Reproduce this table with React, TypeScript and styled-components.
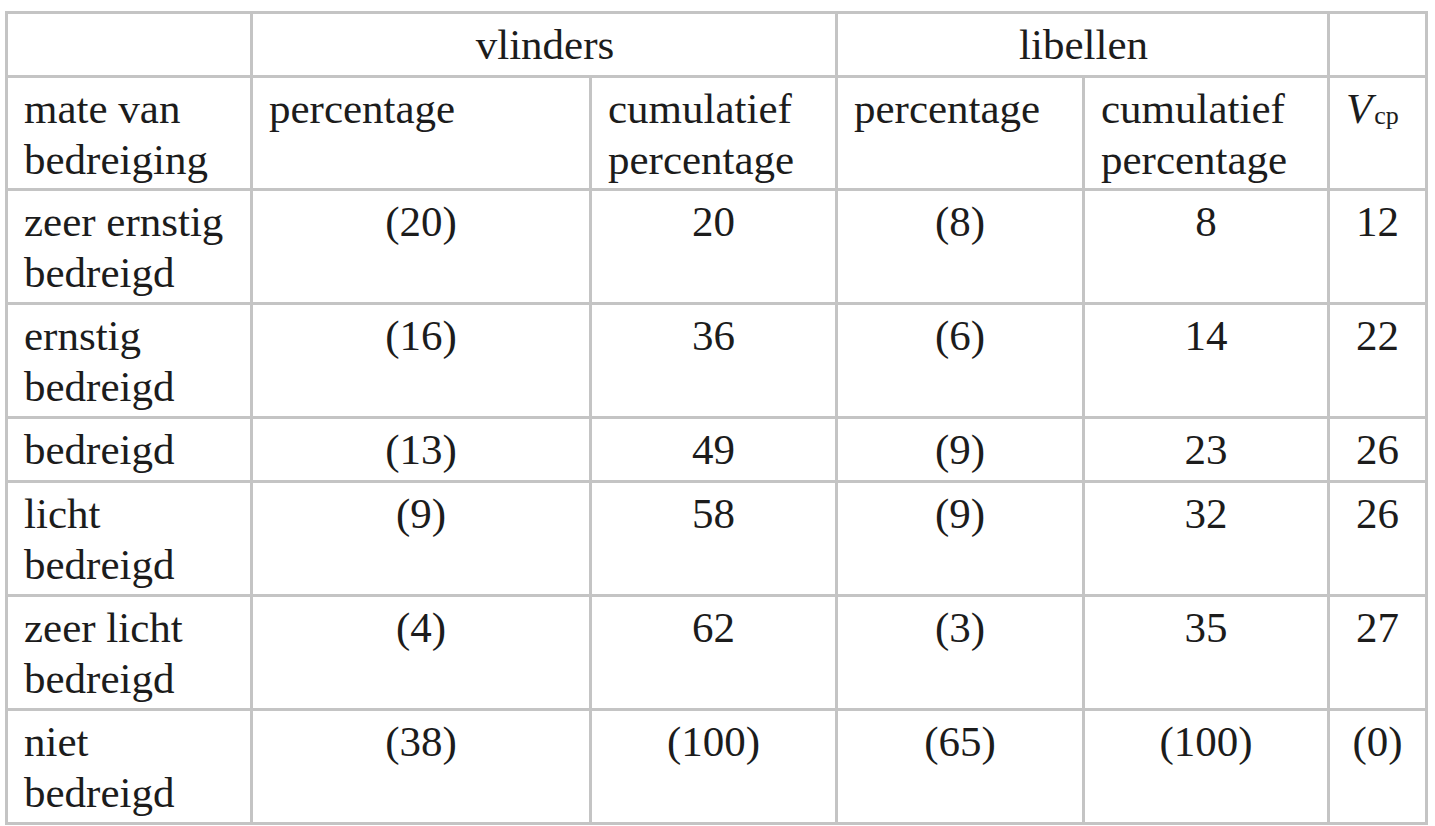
import { Fragment } from 'react'
import styled, { createGlobalStyle } from 'styled-components'

const GlobalStyle = createGlobalStyle`
  html, body {
    margin: 0;
    padding: 0;
    background: #ffffff;
  }
  body {
    font-family: "Liberation Serif", "Times New Roman", serif;
    color: #1c1c1c;
  }
`

const Page = styled.div`
  padding: 11px 0 0 5px;
`

// grey background shows through the 3px gaps as the table rules
const Table = styled.div`
  display: inline-grid;
  grid-template-columns: 242px 336px 243px 244px 242px 95px;
  grid-template-rows: 61px 110px 111px 111px 61px 111px 111px 111px;
  gap: 3px;
  padding: 3px;
  background: #c4c4c4;
`

const Cell = styled.div<{ $align?: 'left' | 'center'; $span?: number }>`
  background: #ffffff;
  font-size: 43px;
  line-height: 51px;
  padding: 5px 14px 0 16px;
  text-align: ${(p) => p.$align || 'left'};
  grid-column: ${(p) => (p.$span ? `span ${p.$span}` : 'auto')};
  white-space: nowrap;
`

const NumCell = styled(Cell)`
  padding-left: 0;
  padding-right: 0;
  text-align: center;
`

const Italic = styled.span`
  font-style: italic;
`

const Sub = styled.span`
  font-size: 26px;
  vertical-align: -1px;
  margin-left: 2px;
`

interface Row {
  label: string[]
  values: string[]
}

const rows: Row[] = [
  { label: ['zeer ernstig', 'bedreigd'], values: ['(20)', '20', '(8)', '8', '12'] },
  { label: ['ernstig', 'bedreigd'], values: ['(16)', '36', '(6)', '14', '22'] },
  { label: ['bedreigd'], values: ['(13)', '49', '(9)', '23', '26'] },
  { label: ['licht', 'bedreigd'], values: ['(9)', '58', '(9)', '32', '26'] },
  { label: ['zeer licht', 'bedreigd'], values: ['(4)', '62', '(3)', '35', '27'] },
  { label: ['niet', 'bedreigd'], values: ['(38)', '(100)', '(65)', '(100)', '(0)'] },
]

const Lines = ({ parts }: { parts: string[] }) => (
  <>
    {parts.map((p, i) => (
      <div key={i}>{p}</div>
    ))}
  </>
)

export default function App() {
  return (
    <Page>
      <GlobalStyle />
      <Table>
        <Cell />
        <Cell $span={2} $align="center">vlinders</Cell>
        <Cell $span={2} $align="center">libellen</Cell>
        <Cell />

        <Cell><Lines parts={['mate van', 'bedreiging']} /></Cell>
        <Cell>percentage</Cell>
        <Cell><Lines parts={['cumulatief', 'percentage']} /></Cell>
        <Cell>percentage</Cell>
        <Cell><Lines parts={['cumulatief', 'percentage']} /></Cell>
        <Cell>
          <Italic>V</Italic>
          <Sub>cp</Sub>
        </Cell>

        {rows.map((r) => (
          <Fragment key={r.label.join(' ')}>
            <Cell><Lines parts={r.label} /></Cell>
            {r.values.map((v, i) => (
              <NumCell key={i}>{v}</NumCell>
            ))}
          </Fragment>
        ))}
      </Table>
    </Page>
  )
}
